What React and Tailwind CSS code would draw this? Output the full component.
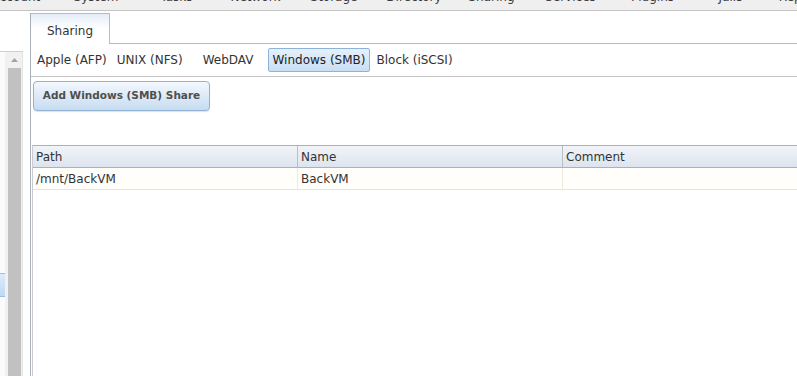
import React from 'react';

const navItems = [
  { label: 'Account', cls: 'w-[80px] ml-[-24px]' },
  { label: 'System', cls: 'w-[80px]' },
  { label: 'Tasks', cls: 'w-[81px]' },
  { label: 'Network', cls: 'w-[77px]' },
  { label: 'Storage', cls: 'w-[80px]' },
  { label: 'Directory', cls: 'w-[80px]' },
  { label: 'Sharing', cls: 'w-[75px]' },
  { label: 'Services', cls: 'w-[83px]' },
  { label: 'Plugins', cls: 'w-[81px]' },
  { label: 'Jails', cls: 'w-[75px]' },
  { label: 'Reporting', cls: 'w-[80px]' },
];

const subTabs = [
  { label: 'Apple (AFP)', cls: 'ml-[1px]' },
  { label: 'UNIX (NFS)', cls: '' },
  { label: 'WebDAV', cls: 'ml-[10px]' },
  { label: 'Windows (SMB)', cls: 'ml-[9px]', active: true },
  { label: 'Block (iSCSI)', cls: 'ml-[1px]' },
];

const shares = [{ path: '/mnt/BackVM', name: 'BackVM', comment: '' }];

export default function App() {
  return (
    <div className="w-[797px] h-[376px] overflow-hidden bg-white text-[12px] text-[#333] font-['DejaVu_Sans',sans-serif]">
      {/* top menu, only the bottom of the labels shows */}
      <div className="h-[11px] bg-[#efefef] border-b border-[#c4c4c4] overflow-hidden flex">
        {navItems.map(item => (
          <div key={item.label} className={`${item.cls} shrink-0 text-center leading-[14px] -mt-[10px] text-[#3a3a3a]`}>
            {item.label}
          </div>
        ))}
      </div>

      <div className="flex h-[365px]">
        {/* left tree + scrollbar */}
        <div className="w-[30px] shrink-0 flex flex-col">
          <div className="h-[40px]" />
          <div className="w-[23px] flex-1 border-t border-[#cfcfcf] flex">
            <div className="w-[5px] bg-[#fbfbfb]">
              <div className="mt-[221px] h-[24px] border-y border-[#9dbde6] bg-linear-to-b from-[#deebfb] to-[#bfd8f3]" />
            </div>
            <div className="w-[18px] bg-[#f1f1f1] border-r border-[#e4e4e4] pl-[3px] pr-[1px] flex flex-col">
              <div className="h-[16px] flex items-center justify-center">
                <svg width="7" height="4" viewBox="0 0 7 4">
                  <path d="M0 4 L3.5 0 L7 4 Z" fill="#a3a3a3" />
                </svg>
              </div>
              <div className="flex-1 bg-[#c1c1c1]" />
            </div>
          </div>
        </div>

        {/* main panel */}
        <div className="flex-1 mt-[2px] border-l border-[#a9afb9] flex flex-col min-w-0">
          <div className="h-[31px] flex">
            <div className="w-[79px] pt-[3px] border-t border-r border-[#b5bcc7] bg-linear-to-b from-[#e4edf8] via-white to-white flex items-center justify-center">
              Sharing
            </div>
            <div className="flex-1 border-b border-[#b9b9b9]" />
          </div>

          <div className="h-[33px] border-b border-[#c4c4c4] flex items-center">
            {subTabs.map(tab => (
              <div
                key={tab.label}
                className={`${tab.cls} h-[24px] px-[4px] flex items-center rounded-[2px] border whitespace-nowrap ${
                  tab.active
                    ? 'border-[#8eb3d8] bg-linear-to-b from-[#e6f0fb] to-[#c9dff5] text-[#222]'
                    : 'border-transparent'
                }`}
              >
                {tab.label}
              </div>
            ))}
          </div>

          <div className="pl-[2px] pt-[4px] h-[68px]">
            <button className="w-[177px] h-[30px] rounded-[4px] border border-[#92b2d4] bg-linear-to-b from-[#f3f8fd] to-[#c7dcf1] text-[10.5px] font-bold text-[#4f4f4f] shadow-[0_1px_1px_rgba(0,0,0,0.12)]">
              Add Windows (SMB) Share
            </button>
          </div>

          <div className="ml-[1px] border-l border-[#c8ccd2] flex-1 overflow-hidden">
            <div className="w-[800px]">
              <div className="flex h-[23px] border-t border-b border-[#aab1bb] bg-linear-to-b from-[#f1f4f9] to-[#dde4ee]">
                <div className="w-[265px] shrink-0 pl-[3px] flex items-center border-r border-[#b8bfc9]">Path</div>
                <div className="w-[265px] shrink-0 pl-[3px] flex items-center border-r border-[#b8bfc9]">Name</div>
                <div className="w-[265px] shrink-0 pl-[3px] flex items-center">Comment</div>
              </div>
              {shares.map(s => (
                <div key={s.path} className="flex h-[22px] border-b border-[#ece4d9] bg-[#fffefb]">
                  <div className="w-[265px] shrink-0 pl-[3px] flex items-center border-r border-[#ede7de]">{s.path}</div>
                  <div className="w-[265px] shrink-0 pl-[3px] flex items-center border-r border-[#ede7de]">{s.name}</div>
                  <div className="w-[265px] shrink-0 pl-[3px] flex items-center">{s.comment}</div>
                </div>
              ))}
            </div>
          </div>
        </div>
      </div>
    </div>
  );
}
